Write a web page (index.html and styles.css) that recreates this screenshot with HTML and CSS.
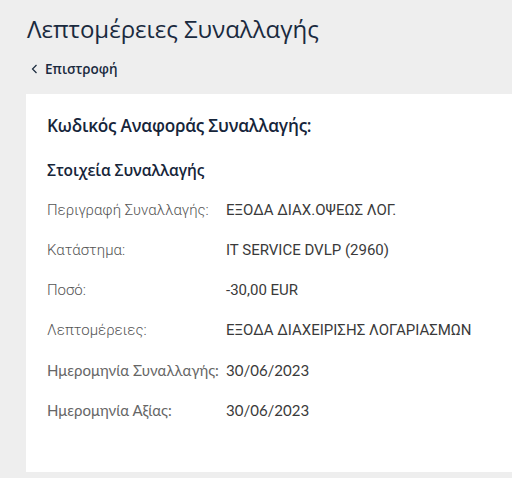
FILE: index.html
```html
<!DOCTYPE html>
<html lang="el">
<head>
    <meta charset="UTF-8">
    <meta name="viewport" content="width=device-width, initial-scale=1.0">
    <title>Λεπτομέρειες Συναλλαγής</title>
    <link rel="stylesheet" href="styles.css">
</head>
<body>
    <div class="page">
        <h1 class="page-title">Λεπτομέρειες Συναλλαγής</h1>

        <a class="back-link" href="#">
            <svg class="back-icon" width="7" height="10" viewBox="0 0 7 10">
                <path d="M5.5 1 L1.5 5 L5.5 9" fill="none" stroke="currentColor" stroke-width="1.2"/>
            </svg>
            Επιστροφή
        </a>

        <div class="card">
            <h2 class="card-title">Κωδικός Αναφοράς Συναλλαγής:</h2>
            <h3 class="section-title">Στοιχεία Συναλλαγής</h3>

            <div class="details">
                <div class="row">
                    <span class="label">Περιγραφή Συναλλαγής:</span>
                    <span class="value">ΕΞΟΔΑ ΔΙΑΧ.ΟΨΕΩΣ ΛΟΓ.</span>
                </div>
                <div class="row">
                    <span class="label">Κατάστημα:</span>
                    <span class="value">IT SERVICE DVLP (2960)</span>
                </div>
                <div class="row">
                    <span class="label">Ποσό:</span>
                    <span class="value">-30,00 EUR</span>
                </div>
                <div class="row">
                    <span class="label">Λεπτομέρειες:</span>
                    <span class="value">ΕΞΟΔΑ ΔΙΑΧΕΙΡΙΣΗΣ ΛΟΓΑΡΙΑΣΜΩΝ</span>
                </div>
                <div class="row row-date">
                    <span class="label">Ημερομηνία Συναλλαγής:</span>
                    <span class="value">30/06/2023</span>
                </div>
                <div class="row row-date">
                    <span class="label">Ημερομηνία Αξίας:</span>
                    <span class="value">30/06/2023</span>
                </div>
            </div>
        </div>
    </div>
</body>
</html>
```

FILE: styles.css
```css
* {
    margin: 0;
    padding: 0;
    box-sizing: border-box;
}

body {
    font-family: "Open Sans", "Noto Sans", sans-serif;
    background: #eeeeee;
    color: #1c2b3f;
    overflow: hidden;
}

.page {
    padding: 12px 0 0 26px;
}

.page-title {
    font-size: 24px;
    font-weight: 400;
    line-height: 34px;
    padding-left: 1px;
    color: #1a2a3e;
}

.back-link {
    display: flex;
    align-items: center;
    gap: 7px;
    margin: 14px 0 0 5px;
    font-size: 13.5px;
    font-weight: 600;
    line-height: 18px;
    color: #1a2a3e;
    text-decoration: none;
}

.card {
    background: #ffffff;
    margin-top: 16px;
    height: 378px;
    padding: 19px 21px;
}

.card-title {
    font-size: 17.2px;
    font-weight: 600;
    line-height: 26px;
    letter-spacing: -0.2px;
    color: #16253a;
}

.section-title {
    margin-top: 21px;
    font-size: 15.5px;
    font-weight: 600;
    line-height: 20px;
    letter-spacing: -0.1px;
    color: #16253a;
}

.details {
    margin-top: 10px;
}

.row {
    display: flex;
    height: 40px;
    align-items: center;
    font-family: Roboto, "Open Sans", sans-serif;
    font-size: 15px;
}

.label {
    width: 179px;
    flex-shrink: 0;
    font-weight: 300;
    color: #555555;
}

.value {
    font-weight: 400;
    color: #3a3a3a;
}

.row-date .label,
.row-date .value {
    font-family: Lato, Roboto, sans-serif;
    font-weight: 400;
}

.row-date .label {
    color: #666666;
}
```
